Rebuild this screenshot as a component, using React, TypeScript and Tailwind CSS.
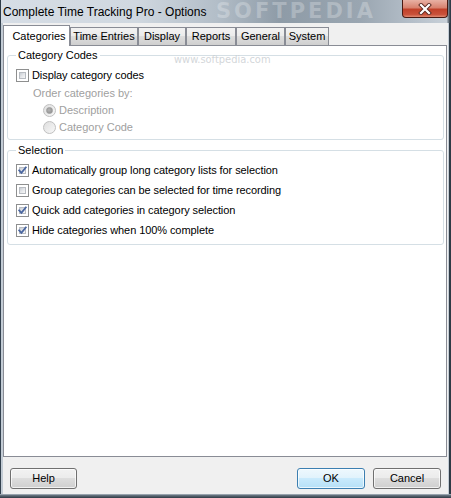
import React from "react";

const FONT = "font-['Liberation_Sans',Arial,sans-serif]";

function CheckBox({ checked }: { checked: boolean }) {
  return (
    <div className="relative w-[13px] h-[13px] shrink-0 border border-[#8e8f8f] bg-white p-[2px]">
      <div className="w-full h-full border border-[#b8bcc2] bg-[linear-gradient(135deg,#c8cdd3_0%,#e4e6e9_50%,#f7f7f7_100%)]" />
      {checked && (
        <svg className="absolute inset-0" width="11" height="11" viewBox="0 0 11 11">
          <path d="M2.2 5.4 L4.4 7.8 L8.8 2.4" fill="none" stroke="#4a66a0" strokeWidth="1.8" strokeLinecap="square" />
        </svg>
      )}
    </div>
  );
}

function Radio({ checked }: { checked: boolean }) {
  return (
    <div className="w-[13px] h-[13px] shrink-0 rounded-full border border-[#c0c0c0] bg-[linear-gradient(135deg,#dedede,#f8f8f8)] flex items-center justify-center">
      {checked && (
        <div className="w-[7px] h-[7px] rounded-full bg-[radial-gradient(circle_at_40%_40%,#b5b5b5,#8a8a8a)] border border-[#9c9c9c]" />
      )}
    </div>
  );
}

function Tab({ label, w, selected }: { label: string; w: string; selected?: boolean }) {
  if (selected) {
    return (
      <div className={`${w} h-[21px] -mb-px relative z-10 bg-white border border-b-0 border-[#898c95] flex items-start justify-center pt-[2px] pl-[5px] text-[11px] text-black`}>
        {label}
      </div>
    );
  }
  return (
    <div className={`${w} h-[18px] bg-[linear-gradient(#f2f2f2_0%,#ebebeb_50%,#dddddd_50%,#cfcfcf_100%)] border border-b-0 border-[#898c95] flex items-center justify-center text-[11px] text-black`}>
      {label}
    </div>
  );
}

function Button({ label, w, def }: { label: string; w: string; def?: boolean }) {
  const cls = def
    ? "border-[#3c7fb1] bg-[linear-gradient(#eef8fd_0%,#e0f2fc_50%,#c9eafc_50%,#b6e0f7_100%)]"
    : "border-[#707070] bg-[linear-gradient(#f2f2f2_0%,#ebebeb_50%,#dddddd_50%,#cfcfcf_100%)]";
  return (
    <div className={`${w} h-[21px] rounded-[3px] border ${cls} shadow-[inset_0_0_0_1px_rgba(255,255,255,0.7)] flex items-center justify-center text-[11px] text-black`}>
      {label}
    </div>
  );
}

function CheckRow({ checked, label }: { checked: boolean; label: string }) {
  return (
    <div className="h-[20px] flex items-center gap-[3px] pl-[8px]">
      <CheckBox checked={checked} />
      <span className="text-[11px] tracking-[-0.08px] text-black">{label}</span>
    </div>
  );
}

export default function App() {
  return (
    <div className={`${FONT} w-[451px] h-[498px] flex flex-col bg-[#34424f]`}>
      {/* Title bar */}
      <div className="relative h-[23px] shrink-0 flex items-start justify-between bg-[linear-gradient(to_right,#2f3c48_0px,#2f3c48_1px,#d6dde5_1px,#d0d8e0_30%,#b3bec8_48%,#8e9ba7_62%,#9aa6b1_80%,#b6c0ca_92%,#c8d0d8_99%,#2f3c48_99.8%)]">
        <div className="absolute left-[216px] top-0 text-[21px] leading-[23px] font-bold tracking-[3px] text-white/25 font-['DejaVu_Sans',sans-serif] select-none pointer-events-none">SOFTPEDIA</div>
        <div className="relative pl-[3px] pt-[3px] text-[12px] text-black">Complete Time Tracking Pro - Options</div>
        <div className="relative mr-[3px] w-[46px] h-[18px] rounded-b-[4px] border border-t-0 border-[#4a1a12] bg-[linear-gradient(#e8b1a4_0%,#d8826f_45%,#c1412a_55%,#c9513a_85%,#e08a72_100%)] flex items-center justify-center">
          <svg width="14" height="12" viewBox="0 0 14 12">
            <path d="M3 2 L11 10 M11 2 L3 10" stroke="#5a2a22" strokeWidth="4" strokeLinecap="square" />
            <path d="M3 2 L11 10 M11 2 L3 10" stroke="#ffffff" strokeWidth="2.2" strokeLinecap="square" />
          </svg>
        </div>
      </div>

      {/* Frame body */}
      <div className="flex-1 flex flex-col pl-[3px] pr-[3px] pb-[4px] bg-[linear-gradient(to_bottom,transparent_calc(100%-4px),#c3ccd5_calc(100%-4px),#6b7884_calc(100%-3px),#2f3a44_100%),linear-gradient(to_right,#34424f_0px,#34424f_1px,#c3ccd5_1px,#c3ccd5_3px,transparent_3px),linear-gradient(to_left,#2e3a45_0px,#2e3a45_2px,#c3ccd5_2px,#c3ccd5_3px,#f0f0f0_3px)]">
        <div className="flex-1 flex flex-col bg-[#f0f0f0]">
          {/* Tabs */}
          <div className="h-[22px] flex items-end">
            <Tab label="Categories" w="w-[67px]" selected />
            <Tab label="Time Entries" w="w-[68px]" />
            <Tab label="Display" w="w-[48px]" />
            <Tab label="Reports" w="w-[50px]" />
            <Tab label="General" w="w-[49px]" />
            <Tab label="System" w="w-[44px]" />
          </div>

          {/* Panel */}
          <div className="relative h-[412px] mr-[1px] bg-white border border-[#898c95] pl-[3px] pr-[2px] pt-[3px]">
            <div className="absolute left-[170px] top-[6px] text-[11px] text-[#c8ccd0]/80 font-['DejaVu_Sans_Condensed',sans-serif] pointer-events-none">www.softpedia.com</div>

            <fieldset className="border border-[#d5dfe5] rounded-[3px] px-0 pb-[3px]">
              <legend className="ml-[8px] px-[2px] text-[11px] leading-[13px] text-black">Category Codes</legend>
              <div className="pt-[3px]">
                <CheckRow checked={false} label="Display category codes" />
                <div className="h-[16px] flex items-center pl-[25px] text-[11px] text-[#a0a0a0]">Order categories by:</div>
                <div className="h-[18px] flex items-center gap-[3px] pl-[35px]">
                  <Radio checked />
                  <span className="text-[11px] text-[#a0a0a0]">Description</span>
                </div>
                <div className="h-[17px] flex items-center gap-[3px] pl-[35px]">
                  <Radio checked={false} />
                  <span className="text-[11px] text-[#a0a0a0]">Category Code</span>
                </div>
              </div>
            </fieldset>

            <fieldset className="mt-[4px] border border-[#d5dfe5] rounded-[3px] px-0 pb-[4px]">
              <legend className="ml-[8px] px-[2px] text-[11px] leading-[13px] text-black">Selection</legend>
              <div className="pt-[3px]">
                <CheckRow checked label="Automatically group long category lists for selection" />
                <CheckRow checked={false} label="Group categories can be selected for time recording" />
                <CheckRow checked label="Quick add categories in category selection" />
                <CheckRow checked label="Hide categories when 100% complete" />
              </div>
            </fieldset>
          </div>

          {/* Buttons */}
          <div className="flex items-start pt-[11px] pl-[7px] pr-[7px]">
            <Button label="Help" w="w-[67px]" />
            <div className="flex-1" />
            <div className="flex gap-[8px]">
              <Button label="OK" w="w-[68px]" def />
              <Button label="Cancel" w="w-[68px]" />
            </div>
          </div>
        </div>
      </div>
    </div>
  );
}
